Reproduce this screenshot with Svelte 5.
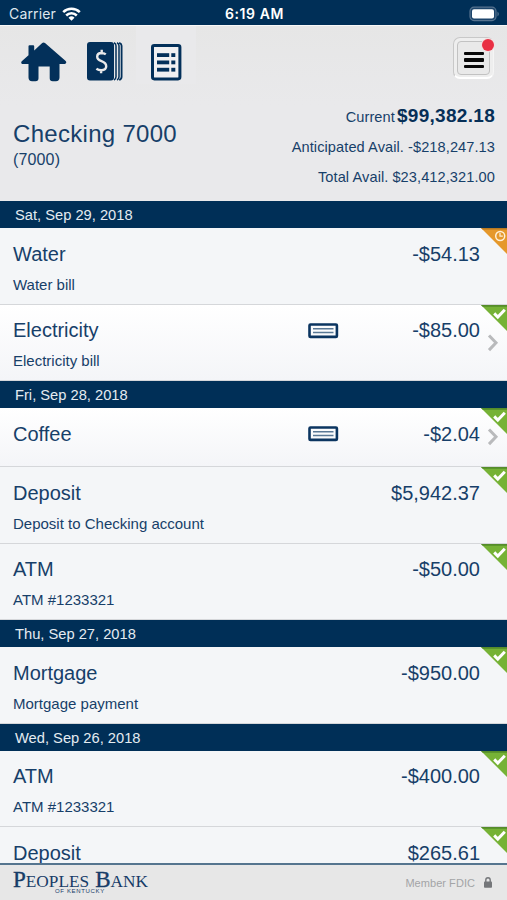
<script lang="ts">
  interface Transaction {
    title: string;
    memo?: string;
    amount: string;
    status: 'pending' | 'cleared';
    check?: boolean;
  }

  interface Day {
    date: string;
    items: Transaction[];
  }

  const balances = [
    { label: 'Current', value: '$99,382.18', main: true },
    { label: 'Anticipated Avail.', value: '-$218,247.13', main: false },
    { label: 'Total Avail.', value: '$23,412,321.00', main: false }
  ];

  const days: Day[] = [
    {
      date: 'Sat, Sep 29, 2018',
      items: [
        { title: 'Water', memo: 'Water bill', amount: '-$54.13', status: 'pending' },
        { title: 'Electricity', memo: 'Electricity bill', amount: '-$85.00', status: 'cleared', check: true }
      ]
    },
    {
      date: 'Fri, Sep 28, 2018',
      items: [
        { title: 'Coffee', amount: '-$2.04', status: 'cleared', check: true },
        { title: 'Deposit', memo: 'Deposit to Checking account', amount: '$5,942.37', status: 'cleared' },
        { title: 'ATM', memo: 'ATM #1233321', amount: '-$50.00', status: 'cleared' }
      ]
    },
    {
      date: 'Thu, Sep 27, 2018',
      items: [{ title: 'Mortgage', memo: 'Mortgage payment', amount: '-$950.00', status: 'cleared' }]
    },
    {
      date: 'Wed, Sep 26, 2018',
      items: [
        { title: 'ATM', memo: 'ATM #1233321', amount: '-$400.00', status: 'cleared' },
        { title: 'Deposit', amount: '$265.61', status: 'cleared' }
      ]
    }
  ];
</script>

<div class="app">
  <div class="status-bar">
    <div class="carrier">
      <span>Carrier</span>
      <svg width="19" height="14" viewBox="0 0 19 14" fill="none" stroke="#fff" stroke-width="2.5">
        <path d="M1.2 5.2a11.8 11.8 0 0 1 16.6 0" />
        <path d="M4.2 8.5a7.5 7.5 0 0 1 10.6 0" />
        <path d="M9.5 13.8 6.5 10.7a4.3 4.3 0 0 1 6 0z" fill="#fff" stroke="none" />
      </svg>
    </div>
    <span class="clock">6:19 AM</span>
    <svg class="battery" width="31" height="16" viewBox="0 0 31 16">
      <rect x="1" y="1.2" width="26" height="13.4" rx="4" fill="#1d456b" stroke="#56738f" stroke-width="1.2" />
      <rect x="3" y="3.2" width="22" height="9.4" rx="2" fill="#fff" />
      <path d="M28.6 5.4q2 2.5 0 5z" fill="#7e96ac" />
    </svg>
  </div>

  <header class="header">
    <div class="toolbar">
      <button class="tool home" aria-label="Home">
        <svg width="46" height="40" viewBox="0 0 46 40" fill="#03305a">
          <path d="M7.5 4.2q0-1 1-1h3.7q1 0 1 1v4.4L21.2.9q1.4-1 2.8 0L44.7 19q1.3 1.6-.3 2.7-.4.4-1.4.4h-4.5v13.4q0 3.7-3.6 3.7h-3.2q-3 0-3-3V24.5H17.5v11.7q0 3-3 3h-3.4q-3.6 0-3.6-3.7V22.1H2.2q-1 0-1.4-.4-1.3-1.4.2-2.7l6.5-5.8z" />
        </svg>
      </button>
      <button class="tool accounts" aria-label="Accounts">
        <svg width="36" height="39" viewBox="0 0 36 39">
          <rect width="27" height="38.4" rx="3" fill="#03305a" />
          <path d="M27 .8q2 .8 2 3v31q0 2.4-2 3.2M30 .8q2 .8 2 3v31q0 2.4-2 3.2" fill="none" stroke="#03305a" stroke-width="1.5" />
          <path d="M32.2.8q2.4.8 2.4 3v31q0 2.4-2.4 3.2" fill="none" stroke="#03305a" stroke-width="1.8" />
          <path d="M18.8 12.4q-1.8-1.4-4.4-1.4-4.2.1-4.2 3.8 0 2.8 4.3 4.4 4.7 1.7 4.7 5 0 3.9-4.8 4-3 0-5-1.5M14.7 7.8V11M14.1 28v3.2" fill="none" stroke="#e9e9ea" stroke-width="2.4" />
        </svg>
      </button>
      <button class="tool list active" aria-label="Transactions">
        <svg width="31" height="37" viewBox="0 0 31 37">
          <rect x="1.5" y="1.5" width="27.4" height="33.4" rx="1.8" fill="#f0f0f2" stroke="#03305a" stroke-width="3" />
          <g fill="#03305a">
            <rect x="6" y="9.2" width="12.2" height="3.8" />
            <rect x="20.3" y="9.2" width="4" height="3.8" />
            <rect x="6" y="16.5" width="12.2" height="3.8" />
            <rect x="20.3" y="16.5" width="4" height="3.8" />
            <rect x="6" y="23.8" width="12.2" height="3.8" />
            <rect x="20.3" y="23.8" width="4" height="3.8" />
          </g>
        </svg>
      </button>
      <button class="menu" aria-label="Menu">
        <span class="menu-face">
          <span class="line"></span>
          <span class="line"></span>
          <span class="line"></span>
        </span>
        <span class="alert-dot"></span>
      </button>
    </div>

    <div class="summary">
      <div class="account">
        <h1>Checking 7000</h1>
        <p>(7000)</p>
      </div>
      <div class="balances">
        {#each balances as balance}
          <div class="balance" class:main={balance.main}>
            <span class="label">{balance.label}</span>
            <span class="value">{balance.value}</span>
          </div>
        {/each}
      </div>
    </div>
  </header>

  <main class="list-view">
    {#each days as day}
      <h2 class="date">{day.date}</h2>
      {#each day.items as item}
        <div class="row" class:short={!item.memo} class:linked={item.check}>
          <div class="row-top">
            <span class="title">{item.title}</span>
            {#if item.check}
              <svg class="check-icon" width="31" height="16" viewBox="0 0 31 16">
                <rect x="1.5" y="1.5" width="27.4" height="12.4" rx="1" fill="#fafbfc" stroke="#0b3560" stroke-width="2.6" />
                <path d="M5 5.7h20.5M5 9.4h20.5" stroke="#597895" stroke-width="1.5" />
              </svg>
            {/if}
            <span class="amount">{item.amount}</span>
          </div>
          {#if item.memo}
            <div class="memo">{item.memo}</div>
          {/if}
          <svg class="corner" width="26" height="26" viewBox="0 0 26 26">
            {#if item.status === 'pending'}
              <path d="M0 0h26v26z" fill="#e5982b" />
              <path d="M0 0h26v1.5H1.5z" fill="#b77922" />
              <circle cx="19.2" cy="8" r="4.5" fill="none" stroke="#fff0d8" stroke-width="1.5" />
              <path d="M19 5v3.2h2.8" fill="none" stroke="#fff0d8" stroke-width="1.2" />
            {:else}
              <path d="M0 0h26v26z" fill="#76b236" />
              <path d="M0 0h26v1.7H1.7z" fill="#558c2a" />
              <path d="m13.2 8.4 3.6 3.6 7-7.2" fill="none" stroke="#fff" stroke-width="3" />
            {/if}
          </svg>
          {#if item.check}
            <svg class="chevron" width="12" height="18" viewBox="0 0 12 18">
              <path d="m2 1.5 7 7.3-7 7.3" fill="none" stroke="#b9babc" stroke-width="3" />
            </svg>
          {/if}
        </div>
      {/each}
    {/each}
  </main>

  <footer class="footer">
    <div class="logo">
      <div class="logo-name">
        <span><b>P</b>EOPLES</span>
        <span><b>B</b>ANK</span>
      </div>
      <div class="logo-sub">OF KENTUCKY</div>
    </div>
    <div class="fdic">
      <span>Member FDIC</span>
      <svg width="8" height="11" viewBox="0 0 8 11">
        <path d="M1.8 5V3a2.2 2.2 0 0 1 4.4 0v2" fill="none" stroke="#75777a" stroke-width="1.4" />
        <rect y="4.5" width="8" height="6.3" rx=".8" fill="#75777a" />
      </svg>
    </div>
  </footer>
</div>

<style>
  :global(body) {
    margin: 0;
  }

  .app {
    display: flex;
    flex-direction: column;
    width: 507px;
    height: 900px;
    overflow: hidden;
    background: #f4f6f8;
    color: #173f69;
    font-family: "Liberation Sans", Arial, sans-serif;
  }

  h1,
  h2,
  p {
    margin: 0;
    font-weight: normal;
  }

  button {
    padding: 0;
    border: none;
    background: none;
  }

  svg {
    display: block;
  }

  .status-bar {
    display: grid;
    grid-template-columns: 1fr auto 1fr;
    align-items: center;
    flex: none;
    box-sizing: border-box;
    height: 25px;
    padding: 2px 7px 0 9px;
    background: #002f57;
    color: #fff;
    font-family: Inter, sans-serif;
    font-size: 14px;
  }

  .carrier {
    display: flex;
    align-items: center;
    gap: 6px;
    color: #dfe7ee;
    letter-spacing: 0.15px;
  }

  .clock {
    font-weight: 600;
    letter-spacing: 0.6px;
  }

  .battery {
    justify-self: end;
  }

  .header {
    flex: none;
    box-sizing: border-box;
    height: 176.4px;
    border-top: 1px solid #f8f8f8;
    background: linear-gradient(#e6e6e6, #e9e9eb 45%, #e9e9eb);
  }

  .toolbar {
    display: flex;
    height: 68px;
  }

  .tool {
    display: flex;
  }

  .home {
    width: 72px;
    padding: 16px 0 0 21px;
  }

  .accounts {
    width: 64px;
    padding: 16px 0 0 15px;
  }

  .list {
    width: 60px;
    height: 58px;
    padding: 17.5px 0 0 15px;
  }

  .list.active {
    background: #e9e9eb;
  }

  .menu {
    position: relative;
    box-sizing: border-box;
    width: 41px;
    height: 42px;
    margin: 11px 13px 0 auto;
    padding: 3px;
    border: 1px solid #c8c8c8;
    border-right-color: #f5f5f5;
    border-bottom: 2px solid #fff;
    border-radius: 7px;
    background: #eeeeee;
  }

  .menu-face {
    display: flex;
    flex-direction: column;
    align-items: center;
    gap: 3px;
    box-sizing: border-box;
    height: 34px;
    padding-top: 10px;
    border: 1px solid #c2c2c2;
    border-radius: 4px;
    background: #e9e9e9;
  }

  .line {
    width: 20px;
    height: 3.4px;
    border-radius: 1px;
    background: #080808;
  }

  .alert-dot {
    position: absolute;
    top: 1px;
    right: -1px;
    width: 12px;
    height: 12px;
    border-radius: 50%;
    background: #e92f43;
    box-shadow: 0 0 0 1px #f3dfe0;
  }

  .summary {
    display: flex;
    justify-content: space-between;
    padding: 0 12px 0 13px;
  }

  .account {
    padding-top: 26px;
  }

  h1 {
    font-size: 24px;
    line-height: 28px;
    letter-spacing: 0.3px;
  }

  .account p {
    font-size: 16px;
    line-height: 20px;
    margin-top: 2px;
    letter-spacing: 0.15px;
  }

  .balances {
    display: flex;
    flex-direction: column;
    align-items: flex-end;
    padding-top: 7px;
  }

  .balance {
    display: flex;
    align-items: baseline;
    gap: 4px;
    height: 29.5px;
    font-size: 14.6px;
    line-height: 29px;
    letter-spacing: 0.08px;
  }

  .main {
    height: 32px;
    gap: 2px;
  }

  .main .value {
    color: #062f57;
    font-size: 19px;
    font-weight: bold;
    letter-spacing: 0.3px;
  }

  .list-view {
    flex: 1;
    min-height: 0;
    overflow: hidden;
  }

  .date {
    box-sizing: border-box;
    height: 27px;
    padding-left: 15px;
    background: #002f57;
    color: #e4ebf1;
    font-size: 14.7px;
    line-height: 29px;
  }

  .row {
    position: relative;
    box-sizing: border-box;
    height: 76.5px;
    padding: 13.3px 27px 0 13px;
    border-bottom: 1px solid #d5d7da;
    background: #f4f6f8;
  }

  .row.linked {
    background: linear-gradient(#ffffff, #f4f5f8);
  }

  .row.short {
    height: 59px;
  }

  .row-top {
    display: grid;
    grid-template-columns: 295px 31px 1fr;
    align-items: center;
    height: 25px;
    font-size: 20px;
    line-height: 25px;
  }

  .amount {
    grid-column: 3;
    text-align: right;
  }

  .memo {
    margin-top: 9px;
    font-size: 15px;
    line-height: 18px;
  }

  .corner {
    position: absolute;
    top: 0;
    right: 0;
  }

  .chevron {
    position: absolute;
    top: 29px;
    right: 8px;
  }

  .short .chevron {
    top: 20px;
  }

  .footer {
    display: flex;
    justify-content: space-between;
    flex: none;
    box-sizing: border-box;
    height: 37px;
    padding: 0 15px 0 13px;
    border-top: 2px solid #55758f;
    background: #e7e7e7;
  }

  .logo {
    width: 136px;
    color: #173c67;
  }

  .logo-name {
    display: flex;
    gap: 6px;
    height: 23px;
    box-sizing: border-box;
    font-family: "Liberation Serif", "Times New Roman", serif;
    font-size: 17.3px;
    line-height: 29px;
    white-space: nowrap;
  }

  .logo-name b {
    font-size: 23px;
    font-weight: normal;
    -webkit-text-stroke: 0.4px #173c67;
  }

  .logo-sub {
    padding-left: 42px;
    font-size: 6px;
    line-height: 7px;
    letter-spacing: 0.65px;
  }

  .fdic {
    display: flex;
    align-items: center;
    gap: 9px;
    color: #a3a4a6;
    font-size: 11px;
    letter-spacing: 0.05px;
  }
</style>
